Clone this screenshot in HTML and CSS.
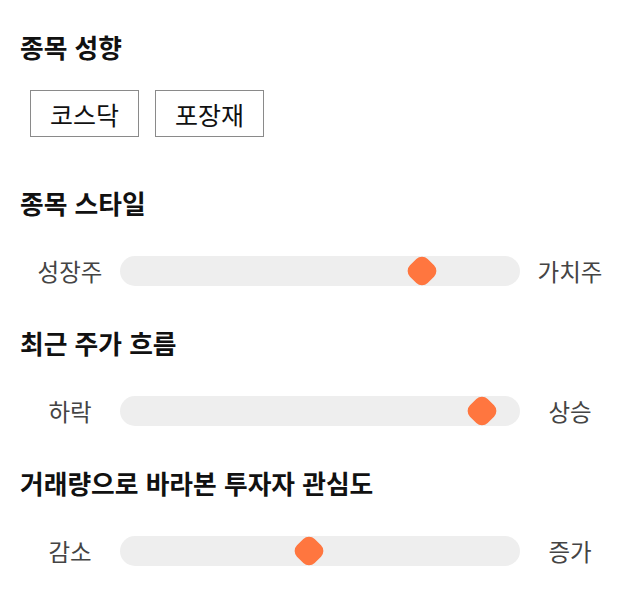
FILE: index.html
```html
<!DOCTYPE html>
<html lang="ko">
<head>
    <meta charset="UTF-8">
    <meta name="viewport" content="width=device-width, initial-scale=1.0">
    <title>종목 성향</title>
    <link rel="stylesheet" href="styles.css">
</head>
<body>
    <div class="profile">
        <section class="group">
            <h2 class="group-title">종목 성향</h2>
            <div class="chips">
                <span class="chip">코스닥</span>
                <span class="chip">포장재</span>
            </div>
        </section>

        <section class="group">
            <h2 class="group-title">종목 스타일</h2>
            <div class="scale">
                <span class="scale-label">성장주</span>
                <div class="track">
                    <span class="thumb" style="left: 75.6%"></span>
                </div>
                <span class="scale-label">가치주</span>
            </div>
        </section>

        <section class="group">
            <h2 class="group-title">최근 주가 흐름</h2>
            <div class="scale">
                <span class="scale-label">하락</span>
                <div class="track">
                    <span class="thumb" style="left: 90.6%"></span>
                </div>
                <span class="scale-label">상승</span>
            </div>
        </section>

        <section class="group">
            <h2 class="group-title">거래량으로 바라본 투자자 관심도</h2>
            <div class="scale">
                <span class="scale-label">감소</span>
                <div class="track">
                    <span class="thumb" style="left: 47.3%"></span>
                </div>
                <span class="scale-label">증가</span>
            </div>
        </section>
    </div>
</body>
</html>
```

FILE: styles.css
```css
body {
    margin: 0;
    background-color: #fff;
    font-family: "Noto Sans CJK KR", "Noto Sans", sans-serif;
    color: #111;
}

.profile {
    padding: 31px 20px 0;
}

.group-title {
    margin: 0;
    height: 32px;
    line-height: 32px;
    font-size: 25.75px;
    font-weight: bold;
    color: #111;
}

/* chips */
.chips {
    display: flex;
    gap: 16px;
    padding: 27px 10px 50px;
}

.chip {
    display: flex;
    align-items: center;
    justify-content: center;
    width: 109px;
    height: 47px;
    box-sizing: border-box;
    border: 1px solid #8a8a8a;
    font-size: 25px;
    color: #111;
}

/* sliders */
.scale {
    display: flex;
    align-items: center;
    margin: 37px -20px 41px;
    padding: 0 20px;
}

.scale-label {
    width: 100px;
    text-align: center;
    font-size: 23.5px;
    line-height: 30px;
    color: #444;
}

.track {
    position: relative;
    flex: 1;
    height: 30px;
    border-radius: 15px;
    background-color: #eeeeee;
}

.thumb {
    position: absolute;
    top: 50%;
    width: 25px;
    height: 25px;
    border-radius: 8px;
    background-color: #ff763f;
    transform: translate(-50%, -50%) rotate(45deg);
}
```
